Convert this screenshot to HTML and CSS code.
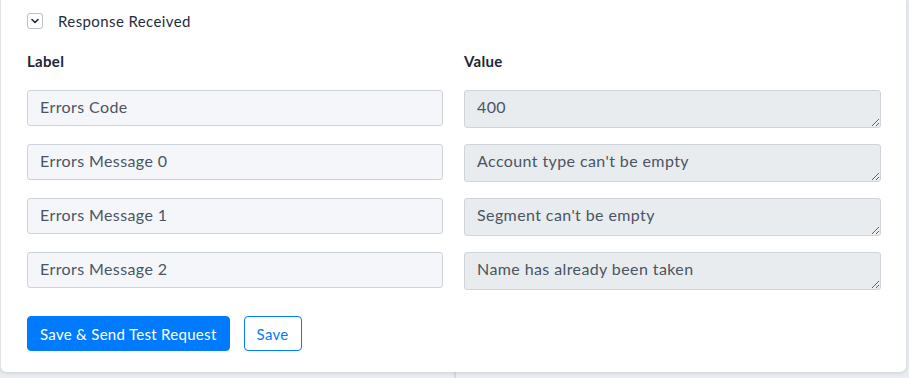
FILE: index.html
```html
<!DOCTYPE html>
<html>
<head>
    <title>Response Received</title>
    <link rel="stylesheet" href="styles.css">
</head>
<body>
    <div class="page">
        <div class="response-card">
            <div class="toggle-row">
                <span class="toggle-box">
                    <svg width="10" height="10" viewBox="0 0 10 10"><path d="M2 3.5 L5 6.5 L8 3.5" fill="none" stroke="#1c2a4a" stroke-width="1.6" stroke-linecap="round" stroke-linejoin="round"/></svg>
                </span>
                <span class="toggle-title">Response Received</span>
            </div>

            <div class="field-grid">
                <div class="col-head">Label</div>
                <div class="col-head">Value</div>

                <input type="text" class="field-label" value="Errors Code">
                <textarea class="field-value" disabled>400</textarea>

                <input type="text" class="field-label" value="Errors Message 0">
                <textarea class="field-value" disabled>Account type can't be empty</textarea>

                <input type="text" class="field-label" value="Errors Message 1">
                <textarea class="field-value" disabled>Segment can't be empty</textarea>

                <input type="text" class="field-label" value="Errors Message 2">
                <textarea class="field-value" disabled>Name has already been taken</textarea>
            </div>

            <div class="btn-container">
                <button type="button" class="btn-send">Save &amp; Send Test Request</button>
                <button type="button" class="btn-save">Save</button>
            </div>
        </div>
        <div class="below">
            <div class="below-left"></div>
            <div class="below-right"></div>
        </div>
    </div>
</body>
</html>
```

FILE: styles.css
```css
body {
    font-family: Lato, "Open Sans", sans-serif;
    background-color: #e9ecf0;
    margin: 0;
}

.page {
    width: 909px;
    height: 378px;
    overflow: hidden;
}

.response-card {
    background-color: #fff;
    width: 906px;
    border-left: 1px solid #dfe3e8;
    border-radius: 0 0 6px 6px;
    box-shadow: 0 1px 4px rgba(0, 0, 0, 0.12);
    padding: 12px 25px 21px 26px;
    box-sizing: border-box;
    position: relative;
    z-index: 1;
}

.toggle-row {
    display: flex;
    align-items: center;
    height: 18px;
}

.toggle-box {
    width: 16px;
    height: 16px;
    box-sizing: border-box;
    border: 1px solid #b9c0c8;
    border-radius: 3px;
    display: flex;
    align-items: center;
    justify-content: center;
}

.toggle-title {
    margin-left: 15px;
    font-size: 15px;
    letter-spacing: 0.4px;
    color: #1f2d3d;
}

.field-grid {
    display: grid;
    grid-template-columns: 416px 417px;
    column-gap: 21px;
    row-gap: 16px;
    margin-top: 23px;
    align-items: start;
}

.col-head {
    font-weight: bold;
    font-size: 15px;
    letter-spacing: 0.3px;
    color: #1b2636;
    height: 21px;
    line-height: 16px;
}

.field-label,
.field-value {
    font-family: Lato, "Open Sans", sans-serif;
    font-size: 16px;
    letter-spacing: 0.4px;
    color: #4a5563;
    border: 1px solid #ced4da;
    border-radius: 3px;
    padding: 0 12px;
    margin: 0;
    box-sizing: border-box;
    width: 100%;
}

.field-label {
    height: 36px;
    background-color: #f4f6f9;
    padding-bottom: 4px;
    margin-bottom: 2px;
}

.field-value {
    height: 38px;
    background-color: #e9ecef;
    padding-top: 6px;
    line-height: 20px;
    resize: vertical;
    overflow: hidden;
}

.btn-container {
    display: flex;
    gap: 14px;
    margin-top: 26px;
}

.btn-send {
    background-color: #007bff;
    color: white;
    border: 1px solid #007bff;
    border-radius: 4px;
    font-family: Lato, "Open Sans", sans-serif;
    font-size: 15px;
    letter-spacing: 0.3px;
    height: 35px;
    padding: 0 12px;
    cursor: pointer;
}

.btn-save {
    background-color: #fff;
    color: #007bff;
    border: 1px solid #007bff;
    border-radius: 4px;
    font-family: Lato, "Open Sans", sans-serif;
    font-size: 15px;
    letter-spacing: 0.3px;
    height: 35px;
    padding: 0 12px;
    cursor: pointer;
}

.below {
    display: flex;
    height: 20px;
}

.below-left {
    width: 454px;
    border-right: 2px solid #d5dae0;
}
```
